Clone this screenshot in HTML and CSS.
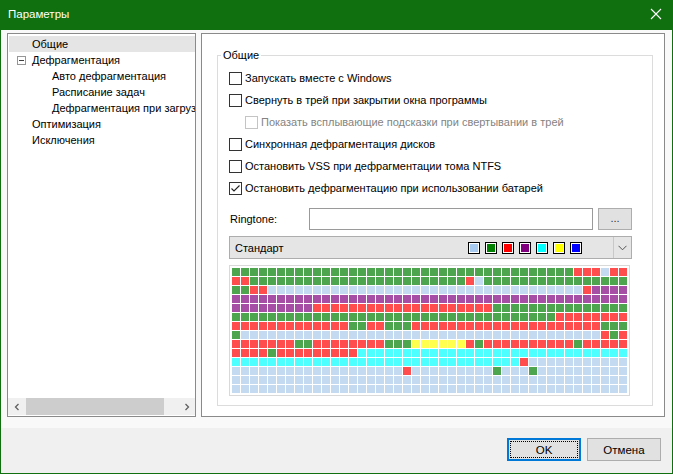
FILE: index.html
```html
<!DOCTYPE html>
<html lang="ru">
<head>
<meta charset="utf-8">
<title>Параметры</title>
<link rel="stylesheet" href="styles.css">
</head>
<body>
<div class="window">
  <div class="titlebar">
    <span class="title">Параметры</span>
    <span class="close"><svg width="12" height="12" viewBox="0 0 12 12"><path d="M1 1L11 11M11 1L1 11" stroke="#fff" stroke-width="1.1" fill="none"/></svg></span>
  </div>
  <div class="main">
    <div class="tree">
      <ul class="tree-list">
        <li class="item top sel">Общие</li>
        <li class="item node"><span class="toggle"></span>Дефрагментация</li>
        <li class="item child">Авто дефрагментация</li>
        <li class="item child">Расписание задач</li>
        <li class="item child">Дефрагментация при загрузке</li>
        <li class="item top">Оптимизация</li>
        <li class="item top">Исключения</li>
      </ul>
      <div class="hscroll">
        <span class="sarrow"><svg width="8" height="8" viewBox="0 0 8 8"><path d="M5.5 1L2.5 4L5.5 7" stroke="#606060" stroke-width="1.3" fill="none"/></svg></span>
        <span class="track"><span class="thumb"></span></span>
        <span class="sarrow"><svg width="8" height="8" viewBox="0 0 8 8"><path d="M2.5 1L5.5 4L2.5 7" stroke="#606060" stroke-width="1.3" fill="none"/></svg></span>
      </div>
    </div>
    <div class="pane">
      <fieldset class="group">
        <legend>Общие</legend>
        <div class="group-body">
          <div class="check"><span class="box"></span>Запускать вместе с Windows</div>
          <div class="check"><span class="box"></span>Свернуть в трей при закрытии окна программы</div>
          <div class="check sub disabled"><span class="box"></span>Показать всплывающие подсказки при свертывании в трей</div>
          <div class="check"><span class="box"></span>Синхронная дефрагментация дисков</div>
          <div class="check"><span class="box"></span>Остановить VSS при дефрагментации тома NTFS</div>
          <div class="check"><span class="box"><svg width="11" height="11" viewBox="0 0 11 11"><path d="M1.5 5.5L4 8L9.5 2.5" stroke="#222" stroke-width="1.1" fill="none"/></svg></span>Остановить дефрагментацию при использовании батарей</div>
          <div class="ring-row">
            <span class="ring-label">Ringtone:</span>
            <span class="edit"></span>
            <span class="dots">...</span>
          </div>
          <div class="combo">
            <span class="combo-text">Стандарт</span>
            <span class="swatches">
              <span class="sw sw-lb"></span>
              <span class="sw sw-g"></span>
              <span class="sw sw-r"></span>
              <span class="sw sw-p"></span>
              <span class="sw sw-c"></span>
              <span class="sw sw-y"></span>
              <span class="sw sw-b"></span>
            </span>
            <span class="drop"><svg width="9" height="6" viewBox="0 0 9 6"><path d="M0.5 0.8L4.5 4.8L8.5 0.8" stroke="#555" stroke-width="1" fill="none"/></svg></span>
          </div>
          <div class="map-frame">
            <div class="map" id="map"></div>
          </div>
        </div>
      </fieldset>
    </div>
  </div>
  <div class="footer">
    <button class="btn default">OK</button>
    <button class="btn">Отмена</button>
  </div>
</div>
<script src="script.js"></script>
</body>
</html>
```

FILE: styles.css
```css
* { box-sizing: border-box; }
html, body { margin: 0; padding: 0; }
body {
  width: 673px;
  height: 474px;
  overflow: hidden;
  font-family: "Liberation Sans", Arial, sans-serif;
  font-size: 11px;
  color: #000;
}
.window {
  width: 673px;
  height: 474px;
  border: 1px solid #10700f;
  border-top: 0;
  display: flex;
  flex-direction: column;
}
.titlebar {
  height: 30px;
  flex: none;
  background: #10700f;
  color: #fff;
  display: flex;
  align-items: center;
  justify-content: space-between;
  padding: 0 10px 2px 7px;
}
.title { font-size: 11.5px; }
.close { display: flex; width: 12px; height: 12px; }
.main {
  flex: 1;
  background: #f9f9f9;
  display: flex;
  gap: 5px;
  padding: 3px 7px 11px 6px;
}
.tree {
  width: 189px;
  flex: none;
  background: #fff;
  border: 1px solid #8a8a8a;
  display: flex;
  flex-direction: column;
  overflow: hidden;
}
.tree-list {
  list-style: none;
  margin: 0;
  padding: 2px 0 0 0;
  flex: 1;
}
.item {
  height: 16px;
  line-height: 16px;
  white-space: nowrap;
  overflow: hidden;
  display: flex;
  align-items: center;
}
.item.top { padding-left: 24px; }
.item.node { padding-left: 9px; }
.item.child { padding-left: 44px; }
.item.sel { background: #e5e5e5; margin-left: 1px; padding-left: 23px; }
.toggle {
  width: 9px;
  height: 9px;
  border: 1px solid #969696;
  margin-right: 6px;
  position: relative;
  flex: none;
}
.toggle::after {
  content: "";
  position: absolute;
  left: 1px;
  right: 1px;
  top: 3px;
  height: 1px;
  background: #404040;
}
.hscroll {
  height: 17px;
  flex: none;
  display: flex;
  background: #f0f0f0;
  margin-bottom: 1px;
}
.sarrow {
  width: 17px;
  display: flex;
  align-items: center;
  justify-content: center;
}
.track { flex: 1; display: flex; padding: 0 1px; }
.thumb { width: 138px; background: #cdcdcd; }
.pane {
  flex: 1;
  background: #fff;
  border: 1px solid #8a8a8a;
  display: flex;
  flex-direction: column;
  padding: 14px 11px 10px 15px;
}
.group {
  flex: 1;
  margin: 0;
  border: 1px solid #dcdcdc;
  padding: 0 0 0 3px;
  min-width: 0;
}
.group legend {
  padding: 0 2px;
  line-height: 14px;
}
.group-body {
  padding: 5px 0 0 8px;
}
.check {
  height: 22px;
  display: flex;
  align-items: center;
  white-space: nowrap;
}
.box {
  width: 13px;
  height: 13px;
  border: 1px solid #333;
  background: #fff;
  margin-right: 3px;
  display: flex;
  align-items: center;
  justify-content: center;
  flex: none;
}
.check.sub { padding-left: 16px; }
.check.disabled { color: #838383; }
.check.disabled .box { border-color: #c4c4c4; }
.ring-row {
  display: flex;
  align-items: center;
  margin-top: 9px;
  height: 22px;
}
.ring-label { width: 80px; padding-left: 1px; }
.edit {
  width: 284px;
  height: 22px;
  border: 1px solid #9a9a9a;
  background: #fff;
}
.dots {
  width: 34px;
  height: 22px;
  margin-left: 5px;
  border: 1px solid #adadad;
  background: #e1e1e1;
  display: flex;
  align-items: center;
  justify-content: center;
  color: #333;
  padding-bottom: 2px;
}
.combo {
  margin-top: 6px;
  width: 403px;
  height: 23px;
  border: 1px solid #adadad;
  background: #e5e5e5;
  display: flex;
  align-items: center;
}
.combo-text { padding-left: 5px; flex: 1; }
.swatches { display: flex; gap: 5px; margin-right: 31px; }
.sw {
  width: 12px;
  height: 12px;
  border: 1px solid #000;
  box-shadow: inset 0 0 0 1px #fff;
}
.sw-lb { background: #a6caf0; }
.sw-g { background: #008000; }
.sw-r { background: #ff0000; }
.sw-p { background: #800080; }
.sw-c { background: #00ffff; }
.sw-y { background: #ffff00; }
.sw-b { background: #0000ff; }
.drop {
  width: 18px;
  height: 21px;
  border-left: 1px solid #c8c8c8;
  display: flex;
  align-items: center;
  justify-content: center;
}
.map-frame {
  margin-top: 6px;
  width: 401px;
  border: 1px solid #d9d9d9;
  padding: 2px;
  background: #fff;
}
.map {
  display: grid;
  grid-template-columns: repeat(44, 8px);
  grid-auto-rows: 8px;
  gap: 1px;
}
.cell { width: 8px; height: 8px; }
.c-g { background: #4da64d; }
.c-r { background: #ff4d4d; }
.c-b { background: #c4daf0; }
.c-p { background: #a64da6; }
.c-c { background: #4dffff; }
.c-y { background: #ffff4d; }
.footer {
  height: 45px;
  flex: none;
  background: #f0f0f0;
  display: flex;
  justify-content: flex-end;
  align-items: flex-start;
  gap: 6px;
  padding: 10px 11px 0 0;
}
.btn {
  width: 74px;
  height: 23px;
  border: 1px solid #adadad;
  background: #e1e1e1;
  font-family: inherit;
  font-size: 11.5px;
  color: #000;
  padding: 0;
}
.btn.default {
  border-color: #0078d7;
  box-shadow: inset 0 0 0 1px #0078d7;
  outline: 1px dotted #000;
  outline-offset: -4px;
}
```

FILE: script.js
```js
var rows = [
  "ggggggggggggggggggggggggggggggggggggggrrrbrr",
  "rrggggggggggggggggggggggggrbgggggggggggggggg",
  "ggrrbbbbbbbbbbbbbbbbbbbbbbbbbbbbbbbbbbbrpppp",
  "pppppppppppppppppppppppppppppppppppppppppppp",
  "ppppppppprrrrrrrrrrrrrrrrrrrrggggggggggggggg",
  "ggggggggggggggggggggggggggggggggggggrrrrrrrr",
  "rrrrrrrrrrrrrggrrgggrrrrrrrrrrrrrrrrrrrrrggg",
  "gbbbbbbbbbbbbbbbbbbbbbbbbbbbbbbbbbbbbbbbbrgr",
  "rrrrrrrggrrrrrrrrgggyyyyyyrgrrrrrrrrrrgrrrrr",
  "rrrrgrrrrrrrrrcccccccccccccccccccccccccccccc",
  "ccccccccccccccccccccccccccccccccrbbbbbbbbbbb",
  "bbbbbbbbbbbbbbbbbbbrbbbbbbbbbgbbbgbbbbbbbbbb",
  "bbbbbbbbbbbbbbbbbbbbbbbbbbbbbbbbbbbbbbbbbbbb",
  "bbbbbbbbbbbbbbbbbbbbbbbbbbbbbbbbbbbbbbbbbbbb"
];
var map = document.getElementById("map");
rows.forEach(function (row) {
  row = (row + "bbbbbbbbbbbbbbbbbbbbbbbbbbbbbbbbbbbbbbbbbbbb").slice(0, 44);
  for (var i = 0; i < row.length; i++) {
    var d = document.createElement("div");
    d.className = "cell c-" + row.charAt(i);
    map.appendChild(d);
  }
});
```
